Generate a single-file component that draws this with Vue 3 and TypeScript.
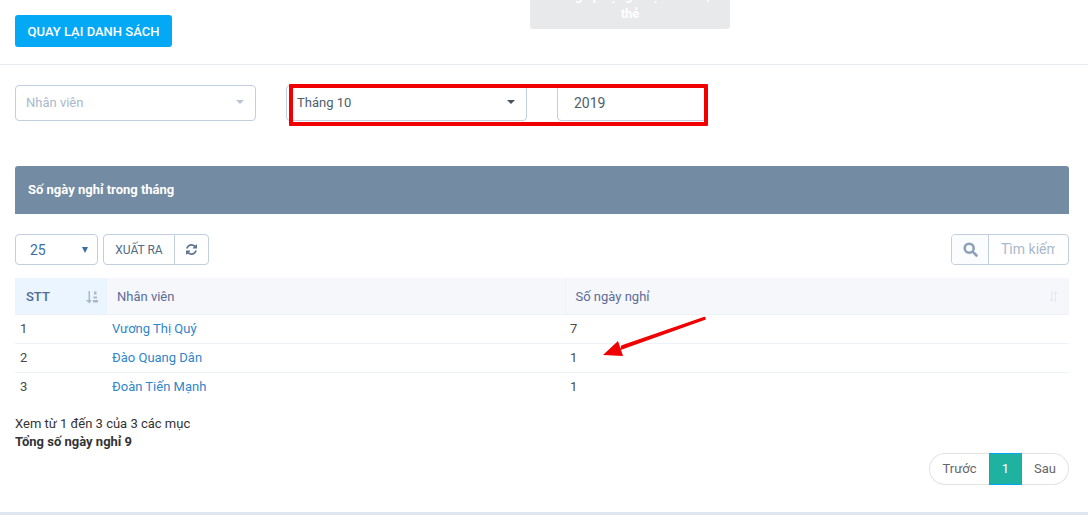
<script setup lang="ts">
interface Row {
  id: number
  name: string
  days: number
}

const rows: Row[] = [
  { id: 1, name: 'Vương Thị Quý', days: 7 },
  { id: 2, name: 'Đào Quang Dân', days: 1 },
  { id: 3, name: 'Đoàn Tiến Mạnh', days: 1 }
]
</script>

<template>
  <div class="page">
    <div class="toast">
      <span>Không áp dụng được cho loại</span>
      <span>thẻ</span>
    </div>

    <div class="topbar">
      <button class="btn-back">QUAY LẠI DANH SÁCH</button>
    </div>

    <div class="filters">
      <div class="select select--staff">
        <span class="placeholder">Nhân viên</span>
        <i class="caret caret--light"></i>
      </div>
      <div class="select select--month">
        <span>Tháng 10</span>
        <i class="caret"></i>
      </div>
      <div class="year">2019</div>
    </div>

    <div class="panel-title">Số ngày nghỉ trong tháng</div>

    <div class="toolbar">
      <div class="page-size">
        <span>25</span>
        <i class="caret caret--blue"></i>
      </div>
      <div class="btn-group">
        <button class="btn-export">XUẤT RA</button>
        <button class="btn-refresh">
          <svg width="11" height="11" viewBox="0 0 1536 1536">
            <path fill="#5f7590" d="M1511 928q0 5-1 7-64 268-268 434.500T764 1536q-146 0-282.500-55T238 1324l-129 129q-19 19-45 19t-45-19-19-45V960q0-26 19-45t45-19h448q26 0 45 19t19 45-19 45l-137 137q71 66 161 102t187 36q134 0 250-65t186-179q11-17 53-117 8-23 30-23h192q13 0 22.500 9.500t9.500 22.500zm25-800v448q0 26-19 45t-45 19h-448q-26 0-45-19t-19-45 19-45l138-138Q969 256 768 256q-134 0-250 65T332 500q-11 17-53 117-8 23-30 23H50q-13 0-22.500-9.500T18 608v-7q65-268 270-434.500T768 0q146 0 284 55.500T1297 212l130-129q19-19 45-19t45 19 19 45z"/>
          </svg>
        </button>
      </div>
      <div class="search">
        <span class="search-icon">
          <svg width="15" height="15" viewBox="0 0 15 15" fill="none" stroke="#8ca0b8" stroke-width="2.600">
            <circle cx="6.200" cy="6.200" r="4.500"/>
            <path d="M9.800 9.800l3.700 3.700" stroke-linecap="round"/>
          </svg>
        </span>
        <span class="search-input">Tìm kiếm</span>
      </div>
    </div>

    <table class="grid">
      <thead>
        <tr>
          <th class="col-stt">
            <span>STT</span>
            <svg class="sort" width="13" height="14" viewBox="0 0 13 14" fill="#a9b9cc">
              <path d="M2.500 1h1.500v9h2l-2.750 3.500L0 10h2.500z"/>
              <rect x="8" y="1.500" width="2.500" height="3"/>
              <rect x="7.500" y="6.500" width="3.500" height="2"/>
              <rect x="7" y="10" width="5" height="2.500"/>
            </svg>
          </th>
          <th class="col-name">Nhân viên</th>
          <th class="col-days">
            <span>Số ngày nghỉ</span>
            <svg class="sort sort--idle" width="10" height="13" viewBox="0 0 10 13" fill="#e4eaf2">
              <path d="M2 1h1.200v8h1.300L2.600 12 .6 9H2z"/>
              <path d="M7 12H5.800V4H4.500l1.900-3 2 3H7z"/>
            </svg>
          </th>
        </tr>
      </thead>
      <tbody>
        <tr v-for="row in rows" :key="row.id">
          <td>{{ row.id }}</td>
          <td><a class="name">{{ row.name }}</a></td>
          <td>{{ row.days }}</td>
        </tr>
      </tbody>
    </table>

    <div class="summary">
      <div>Xem từ 1 đến 3 của 3 các mục</div>
      <div class="total">Tổng số ngày nghỉ 9</div>
    </div>

    <div class="pager">
      <a class="pager-prev">Trước</a>
      <a class="pager-current">1</a>
      <a class="pager-next">Sau</a>
    </div>

    <div class="footer-line"></div>

    <!-- annotations drawn on top of the screenshot -->
    <div class="mark-box"></div>
    <svg class="mark-arrow" width="110" height="50" viewBox="0 0 110 50">
      <path d="M104 7L20 37l1-3L103.500 5.500a2 2 0 0 1 .5 1.500z" fill="#f00000" stroke="#f00000" stroke-width="1.500" stroke-linejoin="round"/>
      <path d="M2 43L17 29l5 15z" fill="#f00000"/>
    </svg>
  </div>
</template>

<style scoped>
.page {
  position: relative;
  width: 1088px;
  height: 515px;
  overflow: hidden;
  background: #fff;
  font-family: Roboto, "Liberation Sans", sans-serif;
  font-size: 13px;
  color: #333;
}

.toast {
  position: absolute;
  left: 530px;
  top: -28px;
  box-sizing: border-box;
  width: 200px;
  height: 57px;
  padding-top: 15px;
  background: #e8e9eb;
  border-radius: 3px;
  color: #fff;
  font-weight: 700;
  font-size: 13px;
  line-height: 18px;
  text-align: center;
}

.toast span {
  display: block;
}

.topbar {
  height: 65px;
  box-sizing: border-box;
  padding: 15px 15px 0;
  border-bottom: 1px solid #e9ecef;
}

.btn-back {
  height: 32px;
  width: 157px;
  padding: 0;
  border: 0;
  border-radius: 3px;
  background: #03a9f4;
  color: #fff;
  font: 500 13px Roboto, sans-serif;
}

.filters {
  display: flex;
  margin: 20px 0 0 15px;
  height: 36px;
}

.select {
  display: flex;
  align-items: center;
  justify-content: space-between;
  box-sizing: border-box;
  height: 36px;
  border: 1px solid #c2cfdc;
  border-radius: 4px;
  padding: 0 10px 2px;
  color: #4e5e6a;
}

.select--staff {
  width: 241px;
  margin-right: 30px;
}

.select--month {
  width: 241px;
  margin-right: 30px;
}

.placeholder {
  color: #a9b9cc;
}

.caret {
  width: 0;
  height: 0;
  margin-right: 1px;
  border-left: 4.500px solid transparent;
  border-right: 4.500px solid transparent;
  border-top: 4.500px solid #47525f;
}

.caret--light {
  border-top-color: #b7c4d3;
}

.caret--blue {
  margin-right: 0;
  border-left-width: 3.500px;
  border-right-width: 3.500px;
  border-top: 6px solid #3b6ea5;
}

.year {
  box-sizing: border-box;
  width: 150px;
  height: 36px;
  line-height: 34px;
  padding-left: 16px;
  border: 1px solid #c2cfdc;
  border-radius: 4px;
  color: #4e5e6a;
  font-size: 14px;
}

.panel-title {
  height: 48px;
  line-height: 48px;
  margin: 45px 19px 0 15px;
  padding-left: 13px;
  background: #738ba3;
  border-radius: 3px 3px 0 0;
  color: #fff;
  font-size: 13px;
  font-weight: 700;
}

.toolbar {
  display: flex;
  margin: 20px 19px 0 15px;
  height: 31px;
}

.page-size {
  display: flex;
  align-items: center;
  justify-content: space-between;
  box-sizing: border-box;
  width: 83px;
  height: 31px;
  padding: 0 9px 0 14px;
  border: 1px solid #c2cfdc;
  border-radius: 4px;
  color: #3b6ea5;
  font-size: 14px;
}

.btn-group {
  display: flex;
  margin-left: 5px;
}

.btn-group button {
  height: 31px;
  padding: 0;
  background: #fff;
  border: 1px solid #c2cfdc;
}

.btn-export {
  width: 72px;
  border-radius: 4px 0 0 4px;
  color: #4e6a85;
  font: 400 12px Roboto, sans-serif;
}

.btn-refresh {
  width: 35px;
  margin-left: -1px;
  border-radius: 0 4px 4px 0;
  line-height: 0;
}

.search {
  display: flex;
  margin-left: auto;
  box-sizing: border-box;
  width: 118px;
  height: 31px;
  border: 1px solid #c2cfdc;
  border-radius: 4px;
  overflow: hidden;
}

.search-icon {
  display: flex;
  align-items: center;
  justify-content: center;
  flex: none;
  width: 36px;
  background: #fafcfe;
  border-right: 1px solid #c2cfdc;
}

.search-input {
  overflow: hidden;
  width: 54px;
  padding-left: 12px;
  line-height: 29px;
  white-space: nowrap;
  color: #a9b9cc;
  font-size: 14px;
}

.grid {
  width: 1054px;
  margin: 13px 0 0 15px;
  border-collapse: collapse;
  table-layout: fixed;
}

.grid th {
  position: relative;
  height: 36px;
  padding: 2px 0 0 10px;
  box-sizing: border-box;
  background: #f5f7fa;
  border-bottom: 1px solid #edf2f9;
  text-align: left;
  font-weight: 400;
  color: #5d6b98;
}

.grid th.col-stt {
  width: 92px;
  padding-left: 11px;
  background: #ebf5ff;
  font-weight: 500;
  color: #4e6a95;
}

.grid th.col-name {
  width: 458px;
}

.grid th.col-days {
  border-left: 1px solid #edf2f9;
}

.sort {
  position: absolute;
  right: 8px;
  top: 12px;
}

.sort--idle {
  right: 10px;
}

.grid td {
  height: 29px;
  box-sizing: border-box;
  padding: 0 0 0 5px;
  border-bottom: 1px solid #edf2f9;
  color: #4a4a4a;
}

.grid td:last-child {
  padding-left: 5px;
}

.grid tr:last-child td {
  border-bottom: 0;
}

.name {
  color: #2f86c9;
}

.summary {
  margin: 14px 0 0 15px;
  line-height: 18px;
  color: #333;
}

.total {
  font-weight: 700;
}

.pager {
  display: flex;
  justify-content: flex-end;
  margin: 2px 19px 0 0;
  height: 32px;
  line-height: 30px;
  color: #666;
}

.pager a {
  box-sizing: border-box;
  height: 32px;
  text-align: center;
  border: 1px solid #e3e3e3;
}

.pager-prev {
  width: 60px;
  border-right: 0 !important;
  border-radius: 16px 0 0 16px;
}

.pager-current {
  width: 33px;
  background: #20b2a0;
  border-color: #03a9f4 !important;
  color: #fff;
}

.pager-next {
  width: 47px;
  border-left: 0 !important;
  border-radius: 0 16px 16px 0;
}

.footer-line {
  height: 3px;
  margin-top: 27px;
  background: #dfe6ef;
}

.mark-box {
  position: absolute;
  left: 289px;
  top: 84px;
  width: 419px;
  height: 42px;
  box-sizing: border-box;
  border: 4px solid #f00000;
  border-radius: 1px;
}

.mark-arrow {
  position: absolute;
  left: 601px;
  top: 312px;
}
</style>
